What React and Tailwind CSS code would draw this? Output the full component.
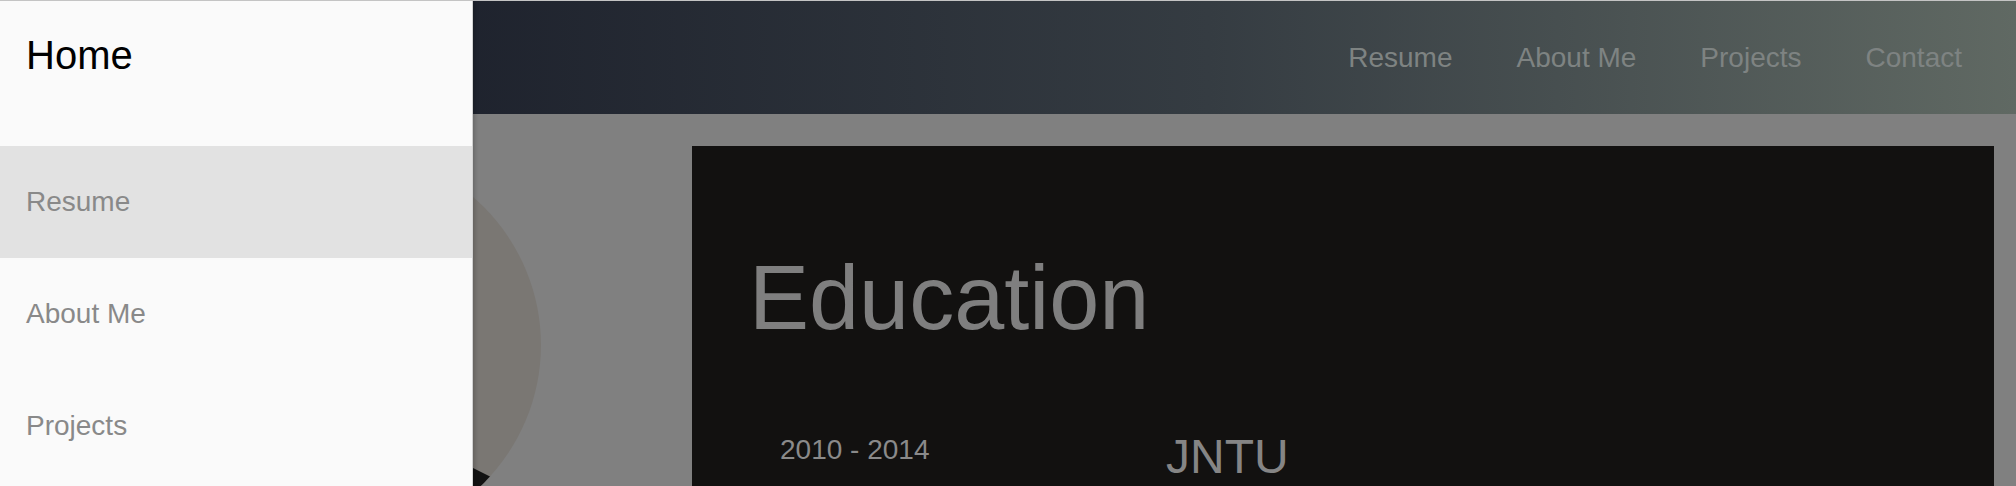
const DRAWER_ITEMS = [
  { label: 'Resume', active: true },
  { label: 'About Me' },
  { label: 'Projects' },
];

const NAV_LINKS = ['Resume', 'About Me', 'Projects', 'Contact'];

function Avatar() {
  return (
    <div className="relative mt-[4px] ml-[151px] w-[390px] h-[390px] shrink-0 rounded-full bg-[#7a7773] overflow-hidden">
      {/* dark shirt corner of the photo */}
      <svg className="absolute left-0 top-0" width="390" height="390" viewBox="0 0 390 390">
        <polygon points="322,318 342,328 330,390 300,390" fill="#121212" />
      </svg>
    </div>
  );
}

function Drawer() {
  return (
    <aside className="absolute left-0 top-0 bottom-0 w-[473px] bg-[#fafafa] border-r border-[#d2d2d2] shadow-[2px_0_4px_rgba(0,0,0,0.18)]">
      <div className="h-[145px] px-[26px] pt-[34px]">
        <h2 className="text-[40px] leading-none text-black">Home</h2>
      </div>
      <ul>
        {DRAWER_ITEMS.map((item) => (
          <li
            key={item.label}
            className={`h-[112px] flex items-center px-[26px] text-[28px] leading-none text-[#898989] ${item.active ? 'bg-[#e2e2e2]' : ''}`}
          >
            {item.label}
          </li>
        ))}
      </ul>
    </aside>
  );
}

export default function App() {
  return (
    <div className="relative w-[2016px] h-[486px] overflow-hidden border-t border-[#c4c4c4] bg-[#808080] font-['Liberation_Sans',Arial,sans-serif]">
      <header className="h-[113px] flex items-center justify-end pr-[22px] bg-linear-to-r from-[#1d212c] from-20% via-[#353c42] via-60% to-[#606963]">
        {NAV_LINKS.map((link) => (
          <a key={link} className="px-8 text-[28px] leading-none text-[#7e8382]">
            {link}
          </a>
        ))}
      </header>

      <main className="flex items-start pt-8">
        <Avatar />
        <section className="ml-[151px] mr-[22px] flex-1 h-[400px] bg-[#121110] pl-[57px] pt-[107px]">
          <h1 className="text-[90px] leading-none text-[#7f7f7f]">Education</h1>
          <div className="mt-[90px] flex items-start">
            <div className="ml-[31px] w-[386px] mt-[3px] text-[28px] leading-none text-[#8a8a8a]">
              2010 - 2014
            </div>
            <div className="text-[48px] leading-none text-[#858585]">JNTU</div>
          </div>
        </section>
      </main>

      <Drawer />
    </div>
  );
}
